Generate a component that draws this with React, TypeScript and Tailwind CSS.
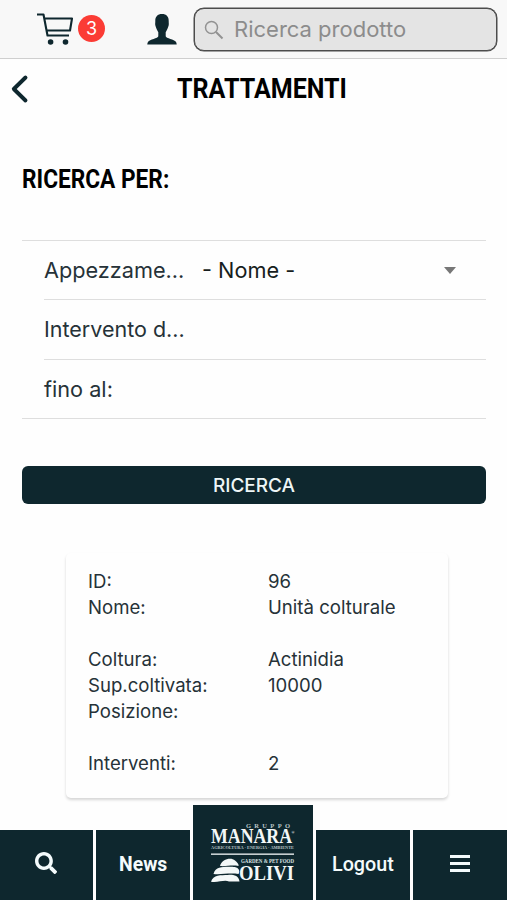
import { FaSearch } from "react-icons/fa";

const details = [
  { label: "ID:", value: "96" },
  { label: "Nome:", value: "Unità colturale" },
  { label: "", value: "" },
  { label: "Coltura:", value: "Actinidia" },
  { label: "Sup.coltivata:", value: "10000" },
  { label: "Posizione:", value: "" },
  { label: "", value: "" },
  { label: "Interventi:", value: "2" },
];

function CartIcon() {
  return (
    <svg width="38" height="34" viewBox="0 0 38 34" fill="none" stroke="#0e272e" strokeWidth="2.1" strokeLinejoin="round">
      <path d="M1 2.500H7.500L11.500 23.500H33M8.500 6.500H36L34 18.500H10.800" />
      <circle cx="14.600" cy="30" r="2.800" fill="#0e272e" stroke="none" />
      <circle cx="29.500" cy="30" r="2.800" fill="#0e272e" stroke="none" />
    </svg>
  );
}

function PersonIcon() {
  return (
    <svg width="30" height="31" viewBox="0 0 30 31" fill="#0e272e">
      <path d="M15 0C10.500 0 8.200 2.700 8.300 7C8.300 9.200 8 9.800 8.300 11.300C8.800 13.700 10.300 16.500 11.300 18.300V22.300C11 24.500 2.600 25.500 1.100 27.800C.5 28.700.4 29.800.3 30.500H29.700C29.600 29.800 29.500 28.700 28.900 27.800C27.400 25.500 19 24.500 18.700 22.300V18.300C19.700 16.500 21.200 13.700 21.700 11.300C22 9.800 21.700 9.200 21.700 7C21.800 2.700 19.500 0 15 0Z" />
    </svg>
  );
}

function Logo() {
  return (
    <svg width="120" height="95" viewBox="0 0 120 95" fill="#f4f8f8" className="font-['Liberation_Serif',serif]">
      <text x="53" y="22.500" fontSize="6.500" textLength="44" fill="#b9c4c6">GRUPPO</text>
      <text x="18" y="38" fontSize="20" fontWeight="700" textLength="81" lengthAdjust="spacingAndGlyphs">MANARA</text>
      <text x="98.500" y="28.500" fontSize="4">®</text>
      <text x="18" y="44.300" fontSize="4.500" fontWeight="700" textLength="83" lengthAdjust="spacingAndGlyphs" fill="#b9c4c6">AGRICOLTURA · ENERGIA · AMBIENTE</text>
      <rect x="18" y="48.500" width="83" height="1.300" />
      <text x="48" y="58" fontSize="5.500" textLength="53" lengthAdjust="spacingAndGlyphs" fill="#dbe2e3">GARDEN &amp; PET FOOD</text>
      <text x="46" y="75" fontSize="22" textLength="55" lengthAdjust="spacingAndGlyphs">OLIVI</text>
      <path d="M27 61C29 54 38 52 42 55.500C44.500 57.500 46 59.500 45.500 61C39 59.500 33 61.700 27 61Z" />
      <path d="M20.500 69C22.500 61.500 29 61.900 35 61.700C40 61.500 45 61.500 46 65C46.500 67 46 68 45.500 69C36 67.500 28 70 20.500 69Z" />
      <path d="M18 76.800C20 69.200 28 70.300 35 69.900C40 69.500 46 70.500 46.500 76.500H36C31 74.500 25 78 18 76.800Z" />
    </svg>
  );
}

export default function App() {
  return (
    <div className="flex h-[900px] w-[507px] flex-col overflow-hidden bg-[#fefefe] font-['Inter',sans-serif] text-[#263238]">
      <header className="flex h-[59px] shrink-0 items-start border-b border-[#cfcfcf] bg-[#f8f8f8] pl-9">
        <div className="mt-3">
          <CartIcon />
        </div>
        <span className="mt-[15px] ml-1 flex size-[27px] items-center justify-center rounded-full bg-[#fb3c35] text-lg text-white">3</span>
        <div className="mt-3.5 ml-[42px]">
          <PersonIcon />
        </div>
        <div className="mt-2 ml-[17px] flex h-[43px] w-[303px] items-center rounded-[10px] border-[1.5px] border-[#4c4c4c] bg-[#e4e4e4] pl-[9px] shadow-[0_0_0_0.5px_#4c4c4c]">
          <svg width="20" height="20" viewBox="0 0 20 20" fill="none" stroke="#929292" strokeWidth="1.500">
            <circle cx="7.500" cy="7.500" r="6" />
            <path d="M12 12L18.500 18.500" strokeWidth="2" />
          </svg>
          <span className="ml-2.5 text-[22px]">
            <span className="text-[#8c8c8c]">Ricerca prodotto</span>
          </span>
        </div>
      </header>

      <div className="grid h-[60px] shrink-0 grid-cols-[40px_1fr_23px] items-center">
        <svg className="ml-2.5" width="20" height="30" viewBox="0 0 20 30" fill="none" stroke="#0e272e" strokeWidth="3.900" strokeLinecap="round" strokeLinejoin="round">
          <path d="M15.500 3.500L3.800 15L15.500 26.500" />
        </svg>
        <h1 className="scale-x-[0.895] text-center font-['Roboto',sans-serif] text-[28px] leading-none font-bold text-black">TRATTAMENTI</h1>
      </div>

      <main className="flex flex-1 flex-col pr-[21px] pl-[22px]">
        <h2 className="mt-[47px] origin-left scale-x-[0.907] font-['Roboto',sans-serif] text-[25px] leading-7 font-bold text-black">RICERCA PER:</h2>

        <div className="mt-[46px] h-[179px] border-y border-[#dedede] pl-[22px] text-[21.7px]">
          <div className="flex h-[59px] items-center border-b border-[#dedede]">
            <span className="w-[158px]">Appezzame...</span>
            <span className="flex-1 text-[#171d20]">- Nome -</span>
            <span className="mr-[30px] border-x-[6px] border-t-[7px] border-x-transparent border-t-[#777]" />
          </div>
          <div className="flex h-[60px] items-center border-b border-[#dedede] text-[21.5px]">Intervento d...</div>
          <div className="flex h-[58px] items-center">fino al:</div>
        </div>

        <button className="mt-[47px] h-[38px] shrink-0 rounded-md bg-[#0e272e] pt-0.5 text-[19px] font-medium text-[#eef6f7]">RICERCA</button>

        <section className="mr-[38px] ml-11 mt-[49px] h-[245px] shrink-0 rounded-[5px] bg-[#fefefe] px-[22px] pt-[15px] text-[18.6px] leading-[26px] shadow-[0_2px_3px_rgba(0,0,0,0.16)]">
          {details.map((row, i) => (
            <div key={i} className="grid h-[26px] grid-cols-[180px_1fr]">
              <span>{row.label}</span>
              <span>{row.value}</span>
            </div>
          ))}
        </section>
      </main>

      <nav className="flex h-[95px] shrink-0 items-end gap-[3px] font-['Roboto',sans-serif] text-[21px] font-bold text-[#f4fbfc]">
        <div className="flex h-[70px] w-[93px] items-center justify-center bg-[#0e272e]">
          <FaSearch className="mr-0.5 mb-1 size-[22px]" />
        </div>
        <div className="flex h-[70px] w-[94px] items-center justify-center bg-[#0e272e]">
          <span className="scale-x-[0.92]">News</span>
        </div>
        <div className="h-[95px] w-[120px] bg-[#0e272e]">
          <Logo />
        </div>
        <div className="flex h-[70px] w-[94px] items-center justify-center bg-[#0e272e] font-medium">
          <span className="scale-x-[0.94]">Logout</span>
        </div>
        <div className="flex h-[70px] flex-1 items-center justify-center bg-[#0e272e]">
          <div className="mb-1 flex flex-col gap-1">
            <span className="h-[3px] w-5 bg-[#f4fbfc]" />
            <span className="h-[3px] w-5 bg-[#f4fbfc]" />
            <span className="h-[3px] w-5 bg-[#f4fbfc]" />
          </div>
        </div>
      </nav>
    </div>
  );
}
